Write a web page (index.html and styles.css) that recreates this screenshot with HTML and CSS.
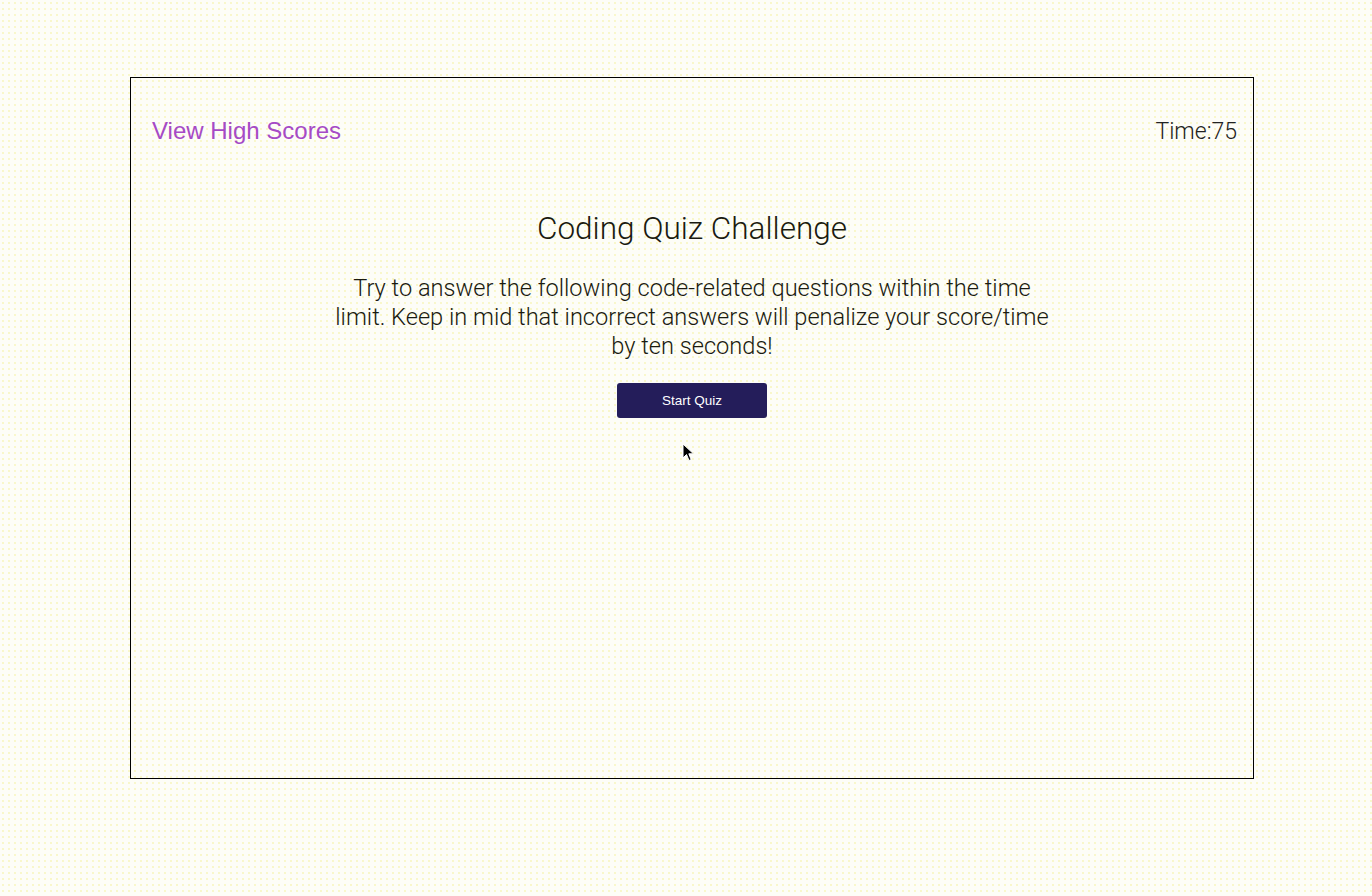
FILE: index.html
```html
<!DOCTYPE html>
<html>
<head>
<meta charset="utf-8">
<link rel="stylesheet" href="styles.css">
</head>
<body>
<div class="frame">
  <header class="top">
    <a class="scores" href="#">View High Scores</a>
    <div class="timer">Time:<span>75</span></div>
  </header>
  <main class="intro">
    <h1>Coding Quiz Challenge</h1>
    <p>Try to answer the following code-related questions within the time limit. Keep in mid that incorrect answers will penalize your score/time by ten seconds!</p>
    <button class="start">Start Quiz</button>
  </main>
</div>
<svg class="cursor" width="14" height="20" viewBox="0 0 14 20"><path d="M1 1 L1 15 L4.5 11.5 L7 17.5 L9.2 16.6 L6.8 10.8 L11.5 10.8 Z" fill="#000" stroke="#fff" stroke-width="1"/></svg>
</body>
</html>
```
FILE: styles.css
```css
html, body {
  margin: 0;
  padding: 0;
}
body {
  background-color: #fdfdf7;
  background-image: radial-gradient(circle, rgba(240,235,120,0.35) 0.8px, transparent 1px);
  background-size: 6px 6px;
  width: 1372px;
  height: 896px;
  position: relative;
  overflow: hidden;
}
.frame {
  margin: 77px 0 0 130px;
  width: 1122px;
  height: 700px;
  border: 1px solid #000;
  box-sizing: content-box;
}
.top {
  display: flex;
  justify-content: space-between;
  align-items: center;
  padding: 38px 16px 0 21px;
  height: 30px;
}
.scores {
  font-family: "Liberation Sans", Arial, sans-serif;
  font-size: 24px;
  color: #a64ac6;
  text-decoration: none;
}
.timer {
  font-family: Roboto, sans-serif;
  font-weight: 300;
  font-size: 23px;
  color: #222;
}
.intro {
  display: flex;
  flex-direction: column;
  align-items: center;
  text-align: center;
}
h1 {
  font-family: Roboto, sans-serif;
  font-weight: 300;
  font-size: 31.5px;
  color: #1a1a10;
  margin: 63px 0 0 0;
  line-height: 40px;
}
p {
  font-family: Roboto, sans-serif;
  font-weight: 300;
  font-size: 23.6px;
  line-height: 29px;
  color: #1a1a10;
  width: 722px;
  margin: 25px 0 0 0;
}
.start {
  margin-top: 22px;
  width: 150px;
  height: 35px;
  border: none;
  border-radius: 3px;
  background: #241d5a;
  color: #fff;
  font-family: "Liberation Sans", Arial, sans-serif;
  font-size: 13.5px;
}
.cursor {
  position: absolute;
  left: 682px;
  top: 443px;
}
```
